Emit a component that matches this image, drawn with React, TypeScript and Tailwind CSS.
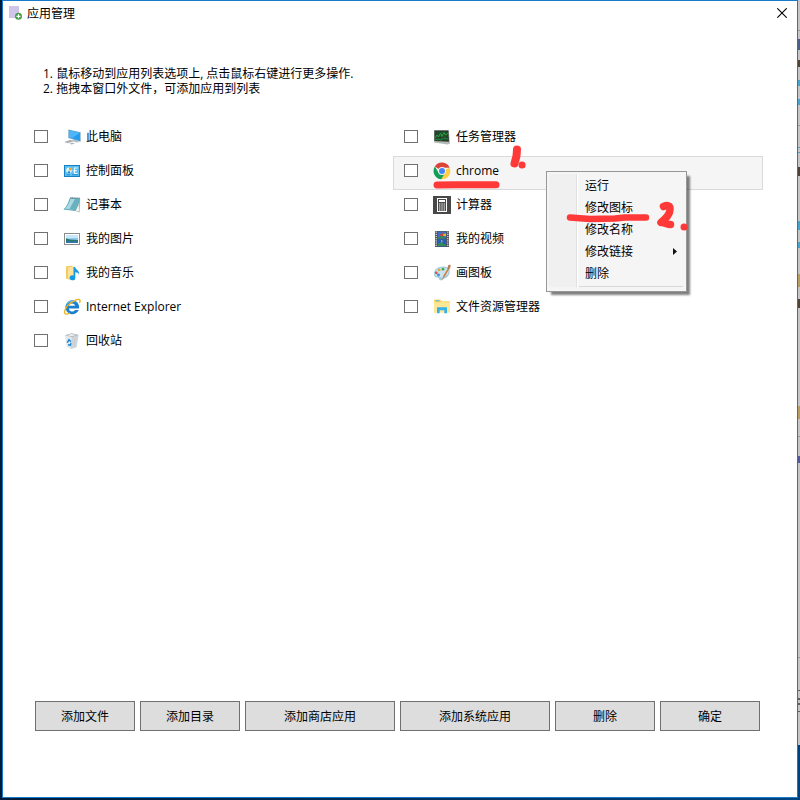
import { useState } from "react";
import type { ReactNode } from "react";

type App = { name: string; icon: ReactNode; active?: boolean };

function Icon({ children }: { children: ReactNode }) {
  return (
    <svg className="size-[18px] shrink-0" viewBox="0 0 18 18" aria-hidden="true">
      {children}
    </svg>
  );
}

const pc = (
  <Icon>
    <path d="M5.3 1.5 17.6 4.2V13.8L5.3 9.9Z" fill="#6fa3c4" />
    <path d="M6 2.2 17 4.8V12.8L6 9.2Z" fill="#229df0" />
    <path d="M6 2.2 17 4.8 9 10.2 6 9.2Z" fill="#4db6f8" />
    <path d="M10 11.5 12.5 12 16.5 14 13 14.6 9.5 12.7Z" fill="#b4bcc2" />
    <path d="M1 14.2 7.5 11.8 12 13.2 5 15.2Z" fill="#c8cdd1" />
    <path d="M2.5 14 8 12.3M4 14.6 9.7 12.8" stroke="#8e979e" strokeWidth=".6" />
    <path d="M6.5 15.6 9.8 14.8 11.8 15.6 8.5 16.5Z" fill="#a9b0b6" />
  </Icon>
);

const control = (
  <Icon>
    <rect x="1" y="3" width="16" height="12" fill="#1681c2" />
    <rect x="2" y="4" width="14" height="10" fill="#5cc1f2" />
    <circle cx="6" cy="8.4" r="2.8" fill="#e9f8ff" />
    <path d="M6 8.4V5.6A2.8 2.8 0 0 1 8.8 8.4Z" fill="#f2a31c" />
    <path d="M6 8.4 4.2 10.6A2.8 2.8 0 0 0 7.5 10.8Z" fill="#278bd0" />
    <path d="M14.5 6H11.5V11.5H14.5M10 8.7H14" stroke="#e6f7ff" strokeWidth="1.1" fill="none" />
    <path d="M3.5 12.8H7M9 12.8H15" stroke="#127abf" strokeWidth=".8" />
  </Icon>
);

const notepad = (
  <Icon>
    <path d="M14.5 3 17.2 2.5 16.8 16.6 11.5 14.8Z" fill="#aeb8b8" />
    <path d="M15.5 5.500 16.3 15.5 12.5 14.4Z" fill="#f3f3ee" />
    <path d="M7 1.6 17 2.2C16 8 14.500 12 12.2 15L.4 13.6C4 10.500 5.500 6 7 1.600Z" fill="#5ba6b5" />
    <path d="M7.500 2.8 15.7 3.200C15 8 13.500 11.500 11.8 13.9L2.200 12.7C5 9.500 6.500 6 7.500 2.800Z" fill="#a9dae3" />
    <path d="M12 3 15.7 3.2C15 8 13.500 11.500 11.8 13.9L6.5 13.1Z" fill="#4c9fb1" opacity=".7" />
    <path d="M7.5 1.8 16.9 2.2" stroke="#71858a" strokeWidth="1.2" strokeDasharray="1 .6" />
  </Icon>
);

const picture = (
  <Icon>
    <rect x="1.5" y="3.5" width="15" height="11" fill="#fff" stroke="#8b8b8b" />
    <rect x="3" y="5" width="12" height="8" fill="#8fc8ef" />
    <path d="M3 5h12v3H9L3 9Z" fill="#c8e7fa" />
    <path d="M3 8.2 7 9.5 15 10V12H3Z" fill="#287763" />
    <path d="M3 11.2H15V13H3Z" fill="#3276ae" />
  </Icon>
);

const music = (
  <Icon>
    <path d="M3 2.2 9.5 1.8V15.6L3 14.8Z" fill="#eecb63" />
    <path d="M5 3.5 11.5 2.6V15L5 16.2Z" fill="#ffe39a" />
    <path d="M10.5 3H12.2C12.4 6 16.8 6.1 16 11 15.5 8.7 13.6 8.5 12.3 8.3V13.7A2.9 2.5 0 1 1 10.5 11.5Z" fill="#159be6" />
  </Icon>
);

const ie = (
  <Icon>
    <path d="M9 2.2A7 7 0 1 0 15.8 12H12A3.4 3.4 0 0 1 5.8 10.4H16.1C16.6 5.5 13.3 2.2 9 2.2ZM5.9 7.8A3.3 3.3 0 0 1 12.2 7.8Z" fill="#1c80ce" fillRule="evenodd" />
    <path d="M3 7.5A6.5 6.5 0 0 1 14 4.7C10 2.8 6 3.6 3 7.5Z" fill="#5fbdf0" />
    <path d="M16.5 5C18 1.8 16.2.2 11.7 2.6 7 4.8 2.6 9.2 1.6 13.3 1 16.6 3.4 16.8 6.6 15" fill="none" stroke="#eeb320" strokeWidth="1.4" />
  </Icon>
);

const recycle = (
  <Icon>
    <path d="M2.2 3.2 8.5 1.3 15.7 3 13.6 15.2 8.3 17 4 14.8Z" fill="#cfd5d9" />
    <path d="M2.2 3.2 9.2 5 8.3 17 4 14.8Z" fill="#e3e8eb" />
    <path d="M2.2 3.2 8.5 1.3 15.7 3 9.2 5Z" fill="#b0b9bf" />
    <path d="M4.2 3.2 8.2 2 12.7 3 9 4Z" fill="#f5f6f7" />
    <path d="M4.3 10.7 6 7.7 7.9 9.7M8.2 11 7.3 13.3 5 12.6" fill="none" stroke="#1b86d6" strokeWidth="1.5" />
    <path d="M12 5.5 11 15M9.2 5 8.3 17" stroke="#bcc5ca" strokeWidth=".5" />
  </Icon>
);

const taskManager = (
  <Icon>
    <path d="M1 2H15.8L17 15.8 14.5 16.6 1 14.4Z" fill="#b6bbb9" />
    <path d="M1.4 2.5H15.4L16 13.8 1.4 13Z" fill="#263b2b" />
    <path d="M2 5H15M2 8H15M2 11H15M5 3V13M8.5 3V13M12 3V13" stroke="#16612b" strokeWidth=".6" />
    <path d="M2 10 4 7 5.5 9 7.5 5 9 8.5 11 4.5 12.5 7 15 5.3" stroke="#28a53c" strokeWidth="1" fill="none" />
    <path d="M2 12 5 11 8 12 11 10 15 11" stroke="#1b9f37" strokeWidth=".8" fill="none" />
  </Icon>
);

const chrome = (
  <Icon>
    <path d="M9 9 1.8 4.6A8.3 8.3 0 0 1 16.6 5.7H9Z" fill="#db4437" />
    <path d="M9 9 16.6 5.7A8.3 8.3 0 0 1 8.2 17.3L12 10.7Z" fill="#ffcd40" />
    <path d="M9 9 12.2 10.8 8.2 17.3A8.3 8.3 0 0 1 1.8 4.6L5.8 11Z" fill="#0f9d58" />
    <circle cx="9" cy="9" r="3.9" fill="#f4f4f4" />
    <circle cx="9" cy="9" r="3" fill="#4285f4" />
  </Icon>
);

const calculator = (
  <Icon>
    <rect width="18" height="18" fill="#484848" />
    <rect x="4.5" y="2.5" width="9" height="13" fill="none" stroke="#fff" />
    <rect x="6" y="4" width="6" height="2" fill="#fff" />
    <path d="M6 8H12M6 10H12M6 12H12M6 14H12" stroke="#fff" strokeDasharray="1.4 .9" />
  </Icon>
);

const video = (
  <Icon>
    <rect x="2" y="1" width="14" height="16" fill="#555" />
    <path d="M3.2 1.5V17M14.8 1.5V17" stroke="#e5e5e5" strokeWidth="1.1" strokeDasharray="1.2 1" />
    <rect x="4.8" y="1.5" width="8.4" height="7" fill="#376fcb" />
    <rect x="4.8" y="9.2" width="8.4" height="7.3" fill="#255fbd" />
    <path d="M6 5H12M9 2.5V7" stroke="#dc3f2e" strokeWidth="1.3" />
    <path d="M10.4 3.7H13V6H10.4Z" fill="#e5bd27" />
    <path d="M5 7.2 8 6 12.5 7.7V8.5H5ZM5 14 8 12.5 13 15V16H5Z" fill="#318b54" />
    <path d="M8.8 10V12.5" stroke="#edbe38" />
  </Icon>
);

const paint = (
  <Icon>
    <path d="M1 10C1 5 5.2 2.3 10.5 2.4 15.2 2.5 17.4 5.5 16.6 9 15.7 12.5 13 14 10.8 14.7 9.4 15.2 9.5 17 7.5 16.3 5.3 15.5 6.4 13.2 4 13.5 2.1 13.7 1 12 1 10Z" fill="#a3c9dc" />
    <path d="M2 9.7C2.2 6 6 3.5 10.5 3.5 14.4 3.7 16.2 5.6 15.5 8.5 14.5 12 10 12.5 8.5 14 7 11.4 2 13.7 2 9.7Z" fill="#c9e3ef" />
    <circle cx="3.3" cy="8.8" r="1.4" fill="#d95345" />
    <circle cx="6.2" cy="6" r="1.3" fill="#e8a332" />
    <circle cx="10" cy="5.2" r="1.4" fill="#49a94a" />
    <circle cx="5.5" cy="11" r="1.4" fill="#3d8fd1" />
    <path d="M9 16.3 10.6 11.2 15 4.2 16.3 5 12 12Z" fill="#d37e3c" />
    <path d="M14.3 4.7 15.2 1.3 17.4.5 17.6 2.5 16.4 5.5Z" fill="#b58155" />
  </Icon>
);

const explorer = (
  <Icon>
    <path d="M1 2.2Q1 1.5 1.7 1.5H7.3L8.8 3.2H16.4Q17 3.2 17 4V14.3H1Z" fill="#ffd86b" />
    <rect x="2.5" y="2.3" width="4" height="1" fill="#3eb4e5" />
    <path d="M1 4.5H17V14.5H1Z" fill="#ffe798" />
    <path d="M4 9.3H14V15.3H11.3V12.2H6.7V15.3H4Z" fill="#36b2eb" />
  </Icon>
);

const apps: App[] = [
  { name: "此电脑", icon: pc },
  { name: "任务管理器", icon: taskManager },
  { name: "控制面板", icon: control },
  { name: "chrome", icon: chrome, active: true },
  { name: "记事本", icon: notepad },
  { name: "计算器", icon: calculator },
  { name: "我的图片", icon: picture },
  { name: "我的视频", icon: video },
  { name: "我的音乐", icon: music },
  { name: "画图板", icon: paint },
  { name: "Internet Explorer", icon: ie },
  { name: "文件资源管理器", icon: explorer },
  { name: "回收站", icon: recycle },
];

const menuItems = ["运行", "修改图标", "修改名称", "修改链接", "删除"];

function ContextMenu() {
  return (
    <div
      role="menu"
      className="absolute left-[152px] top-[14px] z-10 w-[141px] border border-[#979797] bg-[#f5f5f5] p-[2px] shadow-[4px_4px_2px_-1px_rgba(0,0,0,0.5)]"
    >
      <div className="flex pb-[2px]">
        <div className="w-7 shrink-0 border-r border-[#e0e0e0] bg-[#f0f0f0]" />
        <div className="flex min-w-0 flex-1 flex-col border-l border-white">
          {menuItems.map((item) => (
            <button key={item} type="button" role="menuitem" className="flex h-[22px] shrink-0 items-center justify-between pl-[7px] pr-[7px] text-left">
              {item}
              {item === "修改链接" && (
                <svg className="h-[7px] w-1" viewBox="0 0 4 7" aria-hidden="true">
                  <path d="M0 0 4 3.5 0 7Z" fill="#111" />
                </svg>
              )}
            </button>
          ))}
          <hr className="mx-px mt-[2px] border-[#d7d7d7]" />
        </div>
      </div>
    </div>
  );
}

function Annotations() {
  return (
    <svg className="pointer-events-none absolute -left-px -top-3 z-20 h-[90px] w-[300px]" viewBox="393 145 300 90" fill="none" stroke="#ff3838" strokeLinecap="round" strokeLinejoin="round" aria-hidden="true">
      <path d="M437 185 455 184.700 496 184.700" strokeWidth="7" />
      <path d="M517 149.500 516.500 156 514.500 163.500" strokeWidth="8" />
      <path d="M522 165H522.100" strokeWidth="7" />
      <path d="M570 217.500 590 219 615 218.500 625 217.500H646" strokeWidth="6.500" />
      <path d="M663.500 206.500C667 205 670.500 205 670 209.500 670 215 665 219 661 222.500 664 222 667 224.500 670.500 224.500" strokeWidth="7.500" />
      <path d="M684 227H684.100" strokeWidth="7" />
    </svg>
  );
}

function AppRow({ app }: { app: App }) {
  const [checked, setChecked] = useState(false);
  return (
    <li className={app.active ? "relative h-[34px] border border-[#dadada] bg-[#f5f5f5]" : "relative h-[34px] border border-transparent"}>
      <label className="flex h-7 items-center pl-[10px]">
        <input
          type="checkbox"
          checked={checked}
          onChange={(e) => setChecked(e.target.checked)}
          className="mb-px mr-[15px] h-[13px] w-[14px] shrink-0 appearance-none border border-[#707070] bg-white checked:bg-[#707070]"
        />
        {app.icon}
        <span className="pb-[2px] pl-[5px]">{app.name}</span>
      </label>
      {app.active && (
        <>
          <ContextMenu />
          <Annotations />
        </>
      )}
    </li>
  );
}

function DesktopEdge() {
  return (
    <svg className="h-[800px] w-[2px] shrink-0" viewBox="0 0 2 800" shapeRendering="crispEdges" aria-hidden="true">
      <rect width="2" height="745" fill="#c6c6c9" />
      <rect y="745" width="2" height="55" fill="#00437c" />
      <path d="M0 30h2v1H0zM0 125h2v1H0zM0 436h2v1H0zM0 657h2v1H0z" fill="#9c9c9f" />
      <path d="M0 39h2v11H0z" fill="#4c5f87" />
      <path d="M0 60h2v7H0zM0 167h2v9H0zM0 299h2v9H0z" fill="#4f4337" />
      <path d="M0 80h2v6H0zM0 99h2v6H0zM0 147h2v1H0zM0 152h2v1H0zM0 221h2v9H0zM0 242h2v6H0z" fill="#4ba3cc" />
      <path d="M0 274h2v13H0zM0 406h2v13H0z" fill="#b79d63" />
      <path d="M0 456h2v7H0z" fill="#545a9d" />
      <path d="M0 690h2v1H0zM0 698h2v2H0zM0 703h2v2H0zM0 711h2v1H0z" fill="#606064" />
    </svg>
  );
}

const actions = ["添加文件", "添加目录", "添加商店应用", "添加系统应用", "删除", "确定"];

export default function App() {
  return (
    <div className="flex min-h-screen overflow-hidden bg-[#001c3b] pl-[2px] font-['Open_Sans','Noto_Sans_CJK_SC',sans-serif] text-[12px] leading-[15px] text-black">
      <div className="flex min-w-0 flex-1 flex-col bg-linear-to-r from-[#001c3b] to-[#004580] pb-[2px]">
        <main className="flex flex-1 flex-col border border-[#1979ca] bg-white">
          <header className="flex h-6 items-center justify-between pl-[6px] pr-[10px]">
            <h1 className="flex items-center gap-[5px]">
              <svg className="h-[14px] w-[13px]" viewBox="0 0 13 14" aria-hidden="true">
                <rect width="10" height="12" fill="#d0c4e8" />
                <circle cx="9.500" cy="10.300" r="3.500" fill="#43a047" />
                <path d="M9.500 8.300V12.300M7.500 10.300H11.500" stroke="#fff" strokeWidth="1.200" />
              </svg>
              应用管理
            </h1>
            <button type="button" aria-label="关闭">
              <svg className="size-[10px]" viewBox="0 0 10 10" aria-hidden="true">
                <path d="M.3.3 9.700 9.700M9.700.3.3 9.700" stroke="#000" strokeWidth="1.100" />
              </svg>
            </button>
          </header>
          <p className="mb-[26px] mt-[41px] pl-10">
            1. 鼠标移动到应用列表选项上, 点击鼠标右键进行更多操作.
            <br />
            2. 拖拽本窗口外文件，可添加应用到列表
          </p>
          <ul className="grid grid-cols-2 pl-5 pr-[34px]">
            {apps.map((app) => (
              <AppRow key={app.name} app={app} />
            ))}
          </ul>
          <footer className="mt-auto grid grid-cols-[2fr_2fr_3fr_3fr_2fr_2fr] gap-[5px] pb-[66px] pl-8 pr-[37px]">
            {actions.map((name) => (
              <button key={name} type="button" className="h-[30px] border border-[#707070] bg-[#dddddd]">
                {name}
              </button>
            ))}
          </footer>
        </main>
      </div>
      <DesktopEdge />
    </div>
  );
}
